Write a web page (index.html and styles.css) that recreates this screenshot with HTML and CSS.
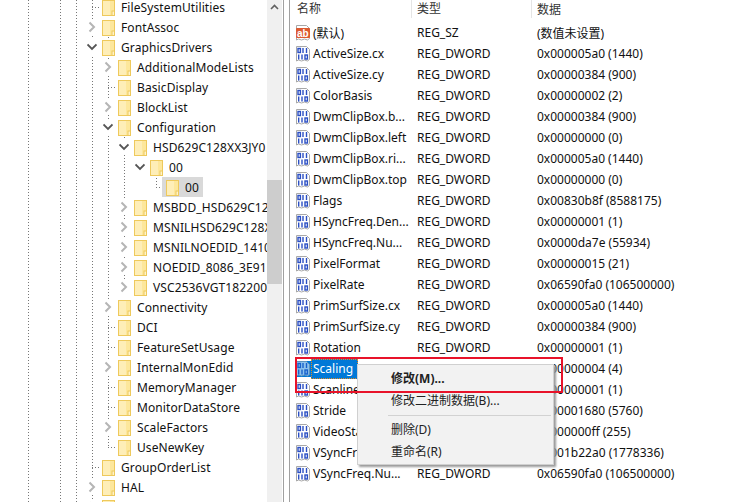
FILE: index.html
```html
<!DOCTYPE html>
<html lang="zh-CN">
  <head>
    <meta charset="UTF-8">
    <title>Registry Editor</title>
    <link rel="stylesheet" href="styles.css">
  </head>
  <body>
    <svg class="defs" width="0" height="0">
      <symbol id="folder" viewBox="0 0 13 16">
        <rect x="0.5" y="0.5" width="12" height="15" fill="#fde79c" stroke="#eec95c"/>
        <rect x="1" y="1" width="7" height="14" fill="#feeeb8"/>
        <rect x="10" y="11" width="2.5" height="4.5" fill="#fff3c8" stroke="#eec95c" stroke-width="1"/>
      </symbol>
      <symbol id="open" viewBox="0 0 10 16">
        <path d="M.5 5.5L5 10l4.500-4.500" fill="none" stroke="#555" stroke-width="1.800"/>
      </symbol>
      <symbol id="closed" viewBox="0 0 10 16">
        <path d="M2.500 3.500L7 8l-4.500 4.500" fill="none" stroke="#b5b5b5" stroke-width="2"/>
      </symbol>
      <symbol id="bin" viewBox="0 0 16 16">
        <path d="M1.500 .5h10l3 3v10l-2 1.500-3-1-3 1-3-1-2 1z" fill="#fff" stroke="#a8a8a8"/>
        <g fill="none" stroke="#2b4fc4" stroke-width="1.400">
          <rect x="3" y="2.500" width="2.400" height="4"/>
          <path d="M8 2v5"/>
          <path d="M11.500 2v5"/>
          <path d="M3.700 8.500v5"/>
          <path d="M7 8.500v5"/>
          <rect x="10" y="9" width="2.400" height="4"/>
        </g>
      </symbol>
      <symbol id="str" viewBox="0 0 16 16">
        <path d="M1.500 .5h10l3 3v10l-2 1.500-3-1-3 1-3-1-2 1z" fill="#fff" stroke="#a8a8a8"/>
        <rect x="1" y="3" width="14" height="10" rx="1" fill="#dd5a30"/>
        <text x="2" y="11.500" class="ab">ab</text>
      </symbol>
    </svg>

    <div class="window">
      <div class="tree-pane">
        <i class="guide guide-a"></i>
        <i class="guide guide-b"></i>
        <i class="guide guide-c"></i>
        <i class="guide guide-d"></i>
        <i class="guide guide-e"></i>
        <i class="guide guide-f"></i>
        <i class="guide guide-g"></i>

        <ul class="tree">
          <li class="node lv1 leaf"><span class="twist"></span><svg class="folder"><use href="#folder"/></svg><span>FileSystemUtilities</span></li>
          <li class="node lv1"><span class="twist"><svg><use href="#closed"/></svg></span><svg class="folder"><use href="#folder"/></svg><span>FontAssoc</span></li>
          <li class="node lv1"><span class="twist"><svg><use href="#open"/></svg></span><svg class="folder"><use href="#folder"/></svg><span>GraphicsDrivers</span></li>
          <li class="node lv2"><span class="twist"><svg><use href="#closed"/></svg></span><svg class="folder"><use href="#folder"/></svg><span>AdditionalModeLists</span></li>
          <li class="node lv2 leaf"><span class="twist"></span><svg class="folder"><use href="#folder"/></svg><span>BasicDisplay</span></li>
          <li class="node lv2"><span class="twist"><svg><use href="#closed"/></svg></span><svg class="folder"><use href="#folder"/></svg><span>BlockList</span></li>
          <li class="node lv2"><span class="twist"><svg><use href="#open"/></svg></span><svg class="folder"><use href="#folder"/></svg><span>Configuration</span></li>
          <li class="node lv3"><span class="twist"><svg><use href="#open"/></svg></span><svg class="folder"><use href="#folder"/></svg><span>HSD629C128XX3JY0</span></li>
          <li class="node lv4"><span class="twist"><svg><use href="#open"/></svg></span><svg class="folder"><use href="#folder"/></svg><span>00</span></li>
          <li class="node lv5 leaf"><span class="twist"></span><span class="current"><svg class="folder"><use href="#folder"/></svg><span>00</span></span></li>
          <li class="node lv3"><span class="twist"><svg><use href="#closed"/></svg></span><svg class="folder"><use href="#folder"/></svg><span>MSBDD_HSD629C128</span></li>
          <li class="node lv3"><span class="twist"><svg><use href="#closed"/></svg></span><svg class="folder"><use href="#folder"/></svg><span>MSNILHSD629C128X</span></li>
          <li class="node lv3"><span class="twist"><svg><use href="#closed"/></svg></span><svg class="folder"><use href="#folder"/></svg><span>MSNILNOEDID_1410</span></li>
          <li class="node lv3"><span class="twist"><svg><use href="#closed"/></svg></span><svg class="folder"><use href="#folder"/></svg><span>NOEDID_8086_3E91</span></li>
          <li class="node lv3"><span class="twist"><svg><use href="#closed"/></svg></span><svg class="folder"><use href="#folder"/></svg><span>VSC2536VGT182200</span></li>
          <li class="node lv2"><span class="twist"><svg><use href="#closed"/></svg></span><svg class="folder"><use href="#folder"/></svg><span>Connectivity</span></li>
          <li class="node lv2 leaf"><span class="twist"></span><svg class="folder"><use href="#folder"/></svg><span>DCI</span></li>
          <li class="node lv2 leaf"><span class="twist"></span><svg class="folder"><use href="#folder"/></svg><span>FeatureSetUsage</span></li>
          <li class="node lv2"><span class="twist"><svg><use href="#closed"/></svg></span><svg class="folder"><use href="#folder"/></svg><span>InternalMonEdid</span></li>
          <li class="node lv2 leaf"><span class="twist"></span><svg class="folder"><use href="#folder"/></svg><span>MemoryManager</span></li>
          <li class="node lv2 leaf"><span class="twist"></span><svg class="folder"><use href="#folder"/></svg><span>MonitorDataStore</span></li>
          <li class="node lv2"><span class="twist"><svg><use href="#closed"/></svg></span><svg class="folder"><use href="#folder"/></svg><span>ScaleFactors</span></li>
          <li class="node lv2 leaf"><span class="twist"></span><svg class="folder"><use href="#folder"/></svg><span>UseNewKey</span></li>
          <li class="node lv1 leaf"><span class="twist"></span><svg class="folder"><use href="#folder"/></svg><span>GroupOrderList</span></li>
          <li class="node lv1"><span class="twist"><svg><use href="#closed"/></svg></span><svg class="folder"><use href="#folder"/></svg><span>HAL</span></li>
          <li class="node lv1"><span class="twist"><svg><use href="#closed"/></svg></span><svg class="folder"><use href="#folder"/></svg><span></span></li>
        </ul>
      </div>

      <div class="scrollbar">
        <svg class="scroll-up" width="9" height="6"><path d="M1 5l3.500-3.500L8 5" fill="none" stroke="#606060" stroke-width="1.600"/></svg>
        <div class="thumb"></div>
      </div>

      <div class="list-pane">
        <div class="list-head">
          <span class="head-cell">名称</span>
          <span class="head-cell">类型</span>
          <span>数据</span>
        </div>

        <div class="val"><span class="col-name"><svg class="val-icon"><use href="#str"/></svg><span class="val-label">(默认)</span></span><span class="col-type">REG_SZ</span><span>(数值未设置)</span></div>
        <div class="val"><span class="col-name"><svg class="val-icon"><use href="#bin"/></svg><span class="val-label">ActiveSize.cx</span></span><span class="col-type">REG_DWORD</span><span>0x000005a0 (1440)</span></div>
        <div class="val"><span class="col-name"><svg class="val-icon"><use href="#bin"/></svg><span class="val-label">ActiveSize.cy</span></span><span class="col-type">REG_DWORD</span><span>0x00000384 (900)</span></div>
        <div class="val"><span class="col-name"><svg class="val-icon"><use href="#bin"/></svg><span class="val-label">ColorBasis</span></span><span class="col-type">REG_DWORD</span><span>0x00000002 (2)</span></div>
        <div class="val"><span class="col-name"><svg class="val-icon"><use href="#bin"/></svg><span class="val-label">DwmClipBox.b...</span></span><span class="col-type">REG_DWORD</span><span>0x00000384 (900)</span></div>
        <div class="val"><span class="col-name"><svg class="val-icon"><use href="#bin"/></svg><span class="val-label">DwmClipBox.left</span></span><span class="col-type">REG_DWORD</span><span>0x00000000 (0)</span></div>
        <div class="val"><span class="col-name"><svg class="val-icon"><use href="#bin"/></svg><span class="val-label">DwmClipBox.ri...</span></span><span class="col-type">REG_DWORD</span><span>0x000005a0 (1440)</span></div>
        <div class="val"><span class="col-name"><svg class="val-icon"><use href="#bin"/></svg><span class="val-label">DwmClipBox.top</span></span><span class="col-type">REG_DWORD</span><span>0x00000000 (0)</span></div>
        <div class="val"><span class="col-name"><svg class="val-icon"><use href="#bin"/></svg><span class="val-label">Flags</span></span><span class="col-type">REG_DWORD</span><span>0x00830b8f (8588175)</span></div>
        <div class="val"><span class="col-name"><svg class="val-icon"><use href="#bin"/></svg><span class="val-label">HSyncFreq.Den...</span></span><span class="col-type">REG_DWORD</span><span>0x00000001 (1)</span></div>
        <div class="val"><span class="col-name"><svg class="val-icon"><use href="#bin"/></svg><span class="val-label">HSyncFreq.Nu...</span></span><span class="col-type">REG_DWORD</span><span>0x0000da7e (55934)</span></div>
        <div class="val"><span class="col-name"><svg class="val-icon"><use href="#bin"/></svg><span class="val-label">PixelFormat</span></span><span class="col-type">REG_DWORD</span><span>0x00000015 (21)</span></div>
        <div class="val"><span class="col-name"><svg class="val-icon"><use href="#bin"/></svg><span class="val-label">PixelRate</span></span><span class="col-type">REG_DWORD</span><span>0x06590fa0 (106500000)</span></div>
        <div class="val"><span class="col-name"><svg class="val-icon"><use href="#bin"/></svg><span class="val-label">PrimSurfSize.cx</span></span><span class="col-type">REG_DWORD</span><span>0x000005a0 (1440)</span></div>
        <div class="val"><span class="col-name"><svg class="val-icon"><use href="#bin"/></svg><span class="val-label">PrimSurfSize.cy</span></span><span class="col-type">REG_DWORD</span><span>0x00000384 (900)</span></div>
        <div class="val"><span class="col-name"><svg class="val-icon"><use href="#bin"/></svg><span class="val-label">Rotation</span></span><span class="col-type">REG_DWORD</span><span>0x00000001 (1)</span></div>
        <div class="val"><span class="col-name"><span class="selected-icon"><svg class="val-icon"><use href="#bin"/></svg></span><span class="val-label selected">Scaling</span></span><span class="col-type">REG_DWORD</span><span>0x00000004 (4)</span></div>
        <div class="val"><span class="col-name"><svg class="val-icon"><use href="#bin"/></svg><span class="val-label">ScanlineOrdering</span></span><span class="col-type">REG_DWORD</span><span>0x00000001 (1)</span></div>
        <div class="val"><span class="col-name"><svg class="val-icon"><use href="#bin"/></svg><span class="val-label">Stride</span></span><span class="col-type">REG_DWORD</span><span>0x00001680 (5760)</span></div>
        <div class="val"><span class="col-name"><svg class="val-icon"><use href="#bin"/></svg><span class="val-label">VideoStandard</span></span><span class="col-type">REG_DWORD</span><span>0x000000ff (255)</span></div>
        <div class="val"><span class="col-name"><svg class="val-icon"><use href="#bin"/></svg><span class="val-label">VSyncFreq.Den...</span></span><span class="col-type">REG_DWORD</span><span>0x001b22a0 (1778336)</span></div>
        <div class="val"><span class="col-name"><svg class="val-icon"><use href="#bin"/></svg><span class="val-label">VSyncFreq.Nu...</span></span><span class="col-type">REG_DWORD</span><span>0x06590fa0 (106500000)</span></div>

        <div class="menu">
          <div class="menu-item menu-default">修改(M)...</div>
          <div class="menu-item">修改二进制数据(B)...</div>
          <div class="menu-sep"></div>
          <div class="menu-item">删除(D)</div>
          <div class="menu-item">重命名(R)</div>
        </div>

        <div class="callout"></div>
      </div>
    </div>
  </body>
</html>
```

FILE: styles.css
```css
* {
  box-sizing: border-box;
}

html,
body {
  margin: 0;
  padding: 0;
  background-color: #fff;
}

body {
  font-family: "Noto Sans", "Noto Sans CJK SC", sans-serif;
  font-size: 12px;
  color: #111;
}

.defs {
  position: absolute;
}

.ab {
  font-family: "Liberation Sans", sans-serif;
  font-size: 10px;
  font-weight: bold;
  fill: #fff;
}

.window {
  display: flex;
  width: 753px;
  height: 502px;
  overflow: hidden;
}

/* left side: key tree */
.tree-pane {
  position: relative;
  flex: none;
  width: 267px;
  height: 502px;
  overflow: hidden;
}

.tree {
  list-style: none;
  margin: -3px 0 0;
  padding: 0;
  letter-spacing: 0.1px;
}

.node {
  position: relative;
  display: flex;
  align-items: center;
  height: 20px;
  white-space: nowrap;
}

.lv1 { padding-left: 84px; }
.lv2 { padding-left: 100px; }
.lv3 { padding-left: 116px; }
.lv4 { padding-left: 132px; }
.lv5 { padding-left: 148px; }

.twist {
  display: flex;
  flex: none;
  align-items: center;
  justify-content: center;
  width: 18px;
  height: 20px;
  padding-right: 2px;
}

.twist svg {
  width: 10px;
  height: 16px;
  background-color: #fff;
}

.leaf .twist {
  background: repeating-linear-gradient(90deg, #777 0 1px, transparent 1px 3px) 8px 10px / 8px 1px no-repeat;
}

.folder {
  position: relative;
  top: 1px;
  flex: none;
  width: 13px;
  height: 16px;
  margin-right: 6px;
}

.current {
  display: flex;
  align-items: center;
  width: 41px;
  height: 20px;
  margin-left: -4px;
  padding-left: 4px;
  background-color: #d9d9d9;
}

.guide {
  position: absolute;
  top: 0;
  bottom: 0;
  width: 1px;
  background: repeating-linear-gradient(#777 0 1px, transparent 1px 3px);
}

.guide-a { left: 28px; }
.guide-b { left: 60px; }
.guide-c { left: 76px; }
.guide-d { left: 92px; }
.guide-e { left: 108px; top: 37px; bottom: 54px; }
.guide-f { left: 124px; top: 137px; bottom: 214px; }
.guide-g { left: 156px; top: 178px; bottom: 314px; }

.scrollbar {
  position: relative;
  flex: none;
  width: 15px;
  background-color: #f0f0f0;
}

.scroll-up {
  display: block;
  margin: 4px 0 0 3px;
}

.thumb {
  width: 15px;
  height: 104px;
  margin-top: 170px;
  background-color: #cdcdcd;
}

/* right side: values */
.list-pane {
  position: relative;
  flex: none;
  width: 464px;
  height: 502px;
  margin-left: 7px;
  padding-left: 5px;
  border-left: 1px solid #a0a0a0;
  box-shadow: -5px 0 0 #fff, -6px 0 0 #a0a0a0;
}

.list-head,
.val {
  display: flex;
  align-items: center;
}

.list-head {
  height: 18px;
  margin-bottom: 4px;
  padding-left: 2px;
  color: #333;
}

.head-cell {
  flex: none;
  width: 115px;
  height: 18px;
  margin-right: 5px;
  border-right: 1px solid #e5e5e5;
  line-height: 18px;
}

.val {
  height: 21px;
  white-space: nowrap;
}

.col-name {
  display: flex;
  flex: none;
  align-items: center;
  width: 122px;
}

.col-type {
  flex: none;
  width: 120px;
}

.val-icon {
  display: block;
  flex: none;
  width: 16px;
  height: 16px;
}

.val-label {
  padding-left: 2px;
}

.selected-icon {
  flex: none;
  background-color: #0078d7;
}

.selected-icon .val-icon {
  opacity: 0.55;
}

.selected {
  padding-right: 5px;
  line-height: 20px;
  color: #fff;
  background-color: #0078d7;
  outline: 1px dotted #e08a20;
  outline-offset: -1px;
}

.menu {
  position: absolute;
  left: 67px;
  top: 364px;
  width: 197px;
  height: 101px;
  padding: 3px 0;
  background-color: #f2f2f2;
  border: 1px solid #d0d0d0;
  box-shadow: 2px 2px 2px #9a9a9a;
}

.menu-item {
  height: 22px;
  padding-left: 33px;
  line-height: 21px;
  color: #222;
}

.menu-default {
  font-weight: bold;
}

.menu-sep {
  height: 1px;
  margin: 3px 2px 3px 30px;
  background-color: #d2d2d2;
}

.callout {
  position: absolute;
  left: 5px;
  top: 357px;
  width: 268px;
  height: 36px;
  border: 2px solid #e8132a;
}
```
